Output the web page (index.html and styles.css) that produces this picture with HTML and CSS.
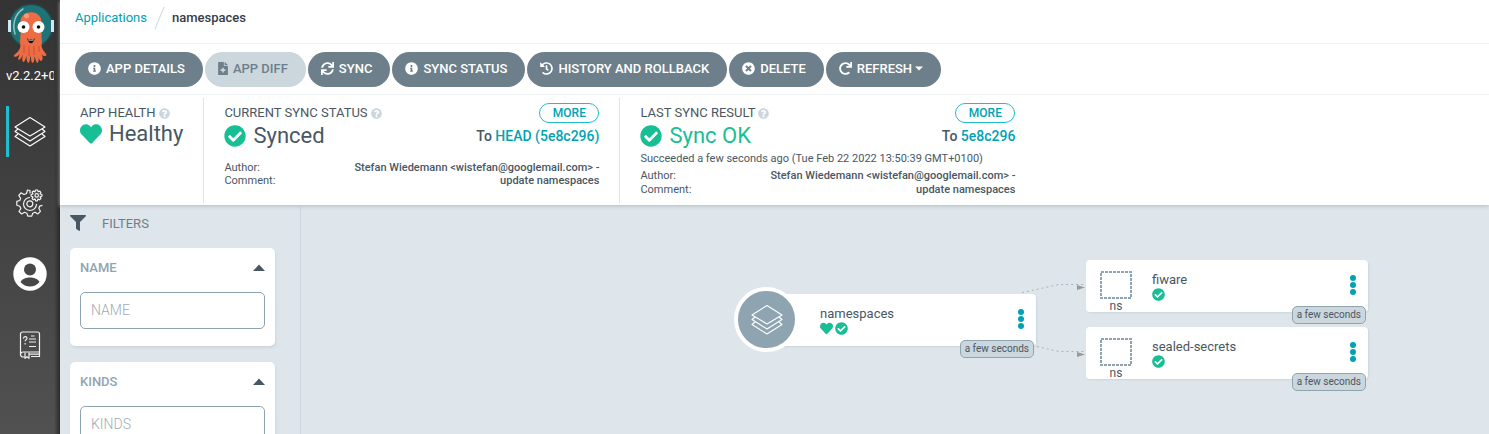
FILE: index.html
```html
<!DOCTYPE html>
<html lang="en">
<head>
<meta charset="utf-8">
<title>namespaces - Applications</title>
<link rel="stylesheet" href="styles.css">
</head>
<body>
<svg class="sprite" aria-hidden="true">
  <symbol id="info" viewBox="0 0 512 512"><path d="M256 8C119.043 8 8 119.083 8 256c0 136.997 111.043 248 248 248s248-111.003 248-248C504 119.083 392.957 8 256 8zm0 110c23.196 0 42 18.804 42 42s-18.804 42-42 42-42-18.804-42-42 18.804-42 42-42zm56 254c0 6.627-5.373 12-12 12h-88c-6.627 0-12-5.373-12-12v-24c0-6.627 5.373-12 12-12h12v-64h-12c-6.627 0-12-5.373-12-12v-24c0-6.627 5.373-12 12-12h64c6.627 0 12 5.373 12 12v100h12c6.627 0 12 5.373 12 12v24z"/></symbol>
  <symbol id="check" viewBox="0 0 512 512"><path d="M504 256c0 136.967-111.033 248-248 248S8 392.967 8 256 119.033 8 256 8s248 111.033 248 248zM227.314 387.314l184-184c6.248-6.248 6.248-16.379 0-22.627l-22.627-22.627c-6.248-6.249-16.379-6.249-22.628 0L216 308.118l-70.059-70.059c-6.248-6.248-16.379-6.248-22.628 0l-22.627 22.627c-6.248 6.248-6.248 16.379 0 22.627l104 104c6.249 6.249 16.379 6.249 22.628.001z"/></symbol>
  <symbol id="heart" viewBox="0 0 512 512"><path d="M462.3 62.6C407.5 15.9 326 24.3 275.7 76.2L256 96.5l-19.7-20.3C186.1 24.3 104.5 15.9 49.7 62.6c-62.8 53.6-66.1 149.8-9.9 207.9l193.5 199.8c12.5 12.9 32.8 12.9 45.3 0l193.5-199.8c56.3-58.1 53-154.3-9.8-207.9z"/></symbol>
  <symbol id="times" viewBox="0 0 512 512"><path d="M256 8C119 8 8 119 8 256s111 248 248 248 248-111 248-248S393 8 256 8zm121.600 313.100c4.700 4.700 4.700 12.300 0 17L338 377.600c-4.700 4.700-12.300 4.700-17 0L256 312l-65.100 65.600c-4.700 4.700-12.300 4.700-17 0L134.400 338c-4.700-4.700-4.700-12.300 0-17l65.600-65-65.600-65.100c-4.700-4.700-4.700-12.300 0-17l39.600-39.600c4.700-4.700 12.300-4.700 17 0l65 65.700 65.100-65.600c4.700-4.700 12.300-4.700 17 0l39.600 39.600c4.700 4.700 4.700 12.300 0 17L312 256l65.600 65.100z"/></symbol>
  <symbol id="redo" viewBox="0 0 512 512"><path d="M500.33 0h-47.41a12 12 0 0 0-12 12.57l4 82.76A247.42 247.42 0 0 0 256 8C119.34 8 7.9 119.53 8 256.19 8.1 393.07 119.1 504 256 504a247.1 247.1 0 0 0 166.18-63.91 12 12 0 0 0 .48-17.43l-34-34a12 12 0 0 0-16.38-.55A176 176 0 1 1 402.1 157.8l-101.53-4.87a12 12 0 0 0-12.57 12v47.41a12 12 0 0 0 12 12h200.33a12 12 0 0 0 12-12V12a12 12 0 0 0-12-12z"/></symbol>
  <symbol id="sync" viewBox="0 0 512 512"><path d="M440.65 12.57l4 82.77A247.16 247.16 0 0 0 255.83 8C134.73 8 33.91 94.92 12.29 209.82A12 12 0 0 0 24.09 224h49.05a12 12 0 0 0 11.67-9.26 175.91 175.91 0 0 1 317-56.94l-101.46-4.86a12 12 0 0 0-12.57 12v47.41a12 12 0 0 0 12 12H500a12 12 0 0 0 12-12V12a12 12 0 0 0-12-12h-47.37a12 12 0 0 0-11.98 12.57zM255.83 432a175.61 175.61 0 0 1-146-77.8l101.8 4.87a12 12 0 0 0 12.57-12v-47.4a12 12 0 0 0-12-12H12a12 12 0 0 0-12 12V500a12 12 0 0 0 12 12h47.35a12 12 0 0 0 12-12.6l-4.15-82.57A247.17 247.17 0 0 0 255.83 504c121.11 0 221.93-86.92 243.55-201.82a12 12 0 0 0-11.8-14.18h-49.05a12 12 0 0 0-11.67 9.26A175.86 175.86 0 0 1 255.83 432z"/></symbol>
  <symbol id="history" viewBox="0 0 512 512"><path d="M504 255.531c.253 136.64-111.18 248.372-247.82 248.468-59.015.042-113.223-20.53-155.822-54.911-11.077-8.94-11.905-25.541-1.839-35.607l11.267-11.267c8.609-8.609 22.353-9.551 31.891-1.984C173.062 425.135 212.781 440 256 440c101.705 0 184-82.311 184-184 0-101.705-82.311-184-184-184-48.814 0-93.149 18.969-126.068 49.932l50.754 50.754c10.08 10.08 2.941 27.314-11.313 27.314H24c-8.837 0-16-7.163-16-16V38.627c0-14.254 17.234-21.393 27.314-11.314l49.372 49.372C129.209 34.136 189.552 8 256 8c136.81 0 247.747 110.78 248 247.531zm-180.912 78.784l9.823-12.63c8.138-10.463 6.253-25.542-4.21-33.679L288 256.349V152c0-13.255-10.745-24-24-24h-16c-13.255 0-24 10.745-24 24v135.651l65.409 50.874c10.463 8.137 25.541 6.253 33.679-4.21z"/></symbol>
  <symbol id="question" viewBox="0 0 512 512"><path d="M504 256c0 136.997-111.043 248-248 248S8 392.997 8 256C8 119.083 119.043 8 256 8s248 111.083 248 248zM262.655 90c-54.497 0-89.255 22.957-116.549 63.758-3.536 5.286-2.353 12.415 2.715 16.258l34.699 26.31c5.205 3.947 12.621 3.008 16.665-2.122 17.864-22.658 30.113-35.797 57.303-35.797 20.429 0 45.698 13.148 45.698 32.958 0 14.976-12.363 22.667-32.534 33.976C247.128 238.528 216 254.941 216 296v4c0 6.627 5.373 12 12 12h56c6.627 0 12-5.373 12-12v-1.333c0-28.462 83.186-29.647 83.186-106.667 0-58.002-60.165-102-116.531-102zM256 338c-25.365 0-46 20.635-46 46 0 25.364 20.635 46 46 46s46-20.636 46-46c0-25.364-20.635-46-46-46z"/></symbol>
  <symbol id="filter" viewBox="0 0 512 512"><path d="M487.976 0H24.028C2.71 0-8.047 25.866 7.058 40.971L192 225.941V432c0 7.831 3.821 15.17 10.237 19.662l80 55.98C298.02 518.69 320 507.493 320 487.98V225.941l184.947-184.97C520.021 25.896 509.338 0 487.976 0z"/></symbol>
  <symbol id="diff" viewBox="0 0 384 512"><path fill-rule="evenodd" d="M24 0h200v136c0 13 11 24 24 24h136v328c0 13-11 24-24 24H24c-13 0-24-11-24-24V24C0 11 11 0 24 0zM256 0h6l122 122v6H256zM160 224v64H96v64h64v64h64v-64h64v-64h-64v-64z"/></symbol>
  <symbol id="caret-up" viewBox="0 0 12 7"><path d="M6 0.500 12 7H0z"/></symbol>
  <symbol id="caret-down" viewBox="0 0 8 5"><path d="M0 0.500h8L4 4.500z"/></symbol>
  <symbol id="dots" viewBox="0 0 6 20"><circle cx="3" cy="3" r="3"/><circle cx="3" cy="10" r="3"/><circle cx="3" cy="17" r="3"/></symbol>
  <symbol id="layers" viewBox="0 0 32 32"><g fill="none" stroke="currentColor" stroke-width="1.100" stroke-linejoin="round"><path d="M16 1.500 31 11 16 20 1 11z"/><path d="M4 13 1 15.500l15 9.500 15-9.500-3-2.500"/><path d="M4 18 1 20.500 16 30l15-9.500-3-2.500"/></g></symbol>
</svg>
<div class="layout">
  <nav class="sidebar" aria-label="Main">
    <svg class="logo" viewBox="0 0 48 64" role="img" aria-label="Argo">
      <circle cx="24" cy="26" r="22.500" fill="#25484a"/>
      <circle cx="24" cy="26" r="21" fill="#1d7376"/>
      <path d="M8 34C5 24 8 14 16 9" fill="none" stroke="#93c4c4" stroke-width="1.500" stroke-linecap="round"/>
      <path d="M1 20h3v12H1zM44 20h3v12h-3z" fill="#cfe6f5"/>
      <path d="M13.500 22C12 8 18 12 24 12s12-4 10.500 10z" fill="none"/>
      <path d="M13.500 22c0-13 21-13 21 0v12c0 6 1 8 0 12 1 5 4 6 5 9-1 2-4 1-5-1 1 3 2 5 0 7-2 0-3-3-3-6 0 3 1 6-1 8-2-1-2-5-3-7 0 3 0 6-2 7-2-2-1-5-2-7-1 3 0 5-2 7-2-1-2-5-2-7-1 2-1 5-3 6-2-1-1-5-1-7-1 2-2 5-4 5-1-2 1-4 1-6-1 2-4 4-6 2 2-3 6-4 7-10-1-4 0-8 0-12z" fill="#ee6c44"/>
      <path d="M17 45v8m5-7v10m5-10v9m5-9v6" stroke="#c94f30" fill="none"/>
      <circle cx="19.500" cy="16" r="2.500" fill="#f79a7a"/>
      <circle cx="16.500" cy="27" r="6" fill="#fff"/><circle cx="31.500" cy="27" r="6" fill="#fff"/>
      <circle cx="16.500" cy="27" r="1.800" fill="#111"/><circle cx="31.500" cy="27" r="1.800" fill="#111"/>
      <path d="M20 38c2 7 6 7 8 0-2 2-6 2-8 0z" fill="#111"/><path d="M21.500 39.300c1.500 1 3.500 1 5 0v1.200h-5z" fill="#fff"/>
    </svg>
    <div class="version">v2.2.2+0f7bf8c</div>
    <a class="nav-item active" href="#applications" aria-label="Applications"><svg width="32" height="32"><use href="#layers"/></svg></a>
    <a class="nav-item" href="#settings" aria-label="Settings">
      <svg class="outline" width="28" height="28" viewBox="0 0 28 28">
        <path d="M14 4.500V1.500L11.500 1l-1 3.500-2.500 1L5 3.800 2.800 6.500 4.600 9.400 3.800 11.500.8 12.300v4l3 .9 1 2.400L3 22.500 5.700 25l2.900-1.700 2.300.9.900 3h4l.9-3 2.300-1 2.900 1.700 2.500-2.600-1.600-3 .9-2.200 2.700-.8"/>
        <path d="M14 8.500a6.500 6.500 0 1 0 6.500 6.500"/><circle cx="13.800" cy="14.800" r="3"/>
        <path d="m21.500 1 .6 1.800 1.700-.7 1 1.200-.8 1.600 1.900.6v1.800l-1.900.6.900 1.700-1.300 1.200-1.600-.9-.6 1.900h-1.800l-.6-1.900-1.700.9-1.200-1.300.9-1.600-1.900-.6V5.500l1.900-.6-.9-1.700 1.300-1.200 1.600.9.500-1.900z"/><circle cx="20.700" cy="6.400" r="1.700"/>
      </svg>
    </a>
    <a class="nav-item" href="#user" aria-label="User info">
      <svg width="34" height="34" viewBox="0 0 34 34"><circle cx="17" cy="17" r="16.700" fill="#fff"/><circle cx="17" cy="12.500" r="6" fill="#474747"/><path d="M7.500 25c2-3.500 6-4.500 9.500-4.500s7.500 1 9.500 4.500c-5 6-14 6-19 0z" fill="#474747"/></svg>
    </a>
    <a class="nav-item" href="#help" aria-label="Documentation">
      <svg class="outline" width="22" height="28" viewBox="0 0 22 28">
        <path d="M6 26H4a2.500 2.500 0 0 1-2.500-2.500V3A2 2 0 0 1 3.500 1h15a2 2 0 0 1 2 2v22.500H12"/><path d="M1.500 23.500C1.500 21.500 3 21 4 21h16.500M10 23.200h10"/><path d="M6 21.500v5.800l2-1.500 2 1.500v-5.800"/>
        <path d="M4.500 7.500c0-2.500 3.500-2.300 3.500-.2 0 1.600-1.900 1.200-1.900 3M6.100 12v1.500M12 5h3.500M10 8h7M10 11h7M10 15.500h7"/>
      </svg>
    </a>
  </nav>
  <main class="page">
    <header class="top">
      <div class="breadcrumb"><a href="#applications">Applications</a><svg width="11" height="22" viewBox="0 0 11 22" aria-hidden="true"><path d="M1 22 10 0" stroke="#ccd6dd" fill="none"/></svg><span>namespaces</span></div>
      <div class="toolbar">
        <button type="button"><svg><use href="#info"/></svg>APP DETAILS</button>
        <button type="button" disabled><svg class="narrow"><use href="#diff"/></svg>APP DIFF</button>
        <button type="button"><svg><use href="#sync"/></svg>SYNC</button>
        <button type="button"><svg><use href="#info"/></svg>SYNC STATUS</button>
        <button type="button"><svg><use href="#history"/></svg>HISTORY AND ROLLBACK</button>
        <button type="button"><svg><use href="#times"/></svg>DELETE</button>
        <button type="button"><svg><use href="#redo"/></svg>REFRESH<svg class="caret"><use href="#caret-down"/></svg></button>
      </div>
      <div class="status">
        <section class="panel">
          <h2>APP HEALTH <svg><use href="#question"/></svg></h2>
          <div class="state compact"><svg><use href="#heart"/></svg>Healthy</div>
        </section>
        <section class="panel wide">
          <div class="row"><h2>CURRENT SYNC STATUS <svg><use href="#question"/></svg></h2><button type="button" class="more">MORE</button></div>
          <div class="row"><div class="state"><svg><use href="#check"/></svg>Synced</div><div class="target">To <a href="#head">HEAD (5e8c296)</a></div></div>
          <dl class="commit"><dt>Author:</dt><dd>Stefan Wiedemann &lt;wistefan@googlemail.com&gt; -</dd><dt>Comment:</dt><dd>update namespaces</dd></dl>
        </section>
        <section class="panel wide">
          <div class="row"><h2>LAST SYNC RESULT <svg><use href="#question"/></svg></h2><button type="button" class="more">MORE</button></div>
          <div class="row"><div class="state ok"><svg><use href="#check"/></svg>Sync OK</div><div class="target">To <a href="#revision">5e8c296</a></div></div>
          <p class="when">Succeeded a few seconds ago (Tue Feb 22 2022 13:50:39 GMT+0100)</p>
          <dl class="commit result"><dt>Author:</dt><dd>Stefan Wiedemann &lt;wistefan@googlemail.com&gt; -</dd><dt>Comment:</dt><dd>update namespaces</dd></dl>
        </section>
      </div>
    </header>
    <div class="body">
      <aside class="filters">
        <div class="filters-title"><svg><use href="#filter"/></svg>FILTERS</div>
        <section class="filter"><div class="row"><label for="name">NAME</label><button type="button" aria-label="Collapse name"><svg><use href="#caret-up"/></svg></button></div><input id="name" type="text" placeholder="NAME"></section>
        <section class="filter"><div class="row"><label for="kinds">KINDS</label><button type="button" aria-label="Collapse kinds"><svg><use href="#caret-up"/></svg></button></div><input id="kinds" type="text" placeholder="KINDS"></section>
      </aside>
      <div class="tree">
        <svg class="edges" aria-hidden="true">
          <g fill="none" stroke="#a3b3bd" stroke-dasharray="2 3"><path d="M721 87.500 758 79.500H785"/><path d="M736 141.500 758 146.500H785"/></g>
          <path d="M776 80v5l8-2.500zM776 147v5l8-2.500z" fill="#999"/>
        </svg>
        <article class="node app">
          <span class="disc"><svg width="32" height="32"><use href="#layers"/></svg></span>
          <div class="label"><span>namespaces</span><span class="marks"><svg><use href="#heart"/></svg><svg><use href="#check"/></svg></span></div>
          <button type="button" class="menu" aria-label="namespaces actions"><svg><use href="#dots"/></svg></button>
          <span class="age">a few seconds</span>
        </article>
        <article class="node fiware">
          <div class="kind"><svg viewBox="0 0 32 28"><rect x="1" y="1" width="30" height="26"/></svg>ns</div>
          <div class="label"><span>fiware</span><span class="marks"><svg><use href="#check"/></svg></span></div>
          <button type="button" class="menu" aria-label="fiware actions"><svg><use href="#dots"/></svg></button>
          <span class="age">a few seconds</span>
        </article>
        <article class="node secrets">
          <div class="kind"><svg viewBox="0 0 32 28"><rect x="1" y="1" width="30" height="26"/></svg>ns</div>
          <div class="label"><span>sealed-secrets</span><span class="marks"><svg><use href="#check"/></svg></span></div>
          <button type="button" class="menu" aria-label="sealed-secrets actions"><svg><use href="#dots"/></svg></button>
          <span class="age">a few seconds</span>
        </article>
      </div>
    </div>
  </main>
</div>
</body>
</html>
```
FILE: styles.css
```css
* { box-sizing: border-box; }
body { margin: 0; font-family: Roboto, "Liberation Sans", sans-serif; font-size: 13px; color: #495763; background: #dee6eb; }
a { color: #00a2b3; text-decoration: none; }
button { font: inherit; border: 0; background: none; padding: 0; cursor: pointer; }
h2, p, dl, dd { margin: 0; font-weight: 400; }
svg { fill: currentColor; flex: none; }
.sprite { position: absolute; width: 0; height: 0; }
.layout { display: flex; height: 100vh; overflow: hidden; }
.row { display: flex; justify-content: space-between; }

.sidebar { width: 60px; flex: none; display: flex; flex-direction: column; align-items: center; background: linear-gradient(to right, transparent 54px, #2b2a27), linear-gradient(#333, #515151); }
.logo { width: 48px; height: 64px; margin-left: 2px; }
.version { width: 48px; margin: 2px 0 20px; overflow: hidden; white-space: nowrap; color: #fff; line-height: 20px; }
.nav-item { width: 48px; height: 51px; margin-bottom: 20px; display: flex; align-items: center; justify-content: center; color: #fff; flex: none; }
.nav-item.active { border-left: 3px solid #1fbdd0; padding-right: 3px; }
.outline { fill: none; stroke: #f2f2f2; stroke-width: 1.2; stroke-linejoin: round; }

.page { flex: 1; min-width: 0; display: flex; flex-direction: column; }
.top { position: relative; background: #fff; box-shadow: 0 1px 4px #aebbc4; }
.breadcrumb { height: 44px; padding: 0 15px 8px; display: flex; align-items: center; gap: 7px; border-bottom: 1px solid #eff3f5; font-weight: 500; color: #363c4a; }
.breadcrumb a { font-weight: 400; }
.toolbar { height: 51px; padding: 8px 15px 7px; display: flex; gap: 2px; border-bottom: 1px solid #eff3f5; }
.toolbar button { display: flex; align-items: center; padding: 0 18px 2px 13px; border-radius: 18px; background: #6d7f8b; color: #fff; font-weight: 500; white-space: nowrap; }
.toolbar button:disabled { background: #ccd6dd; color: #6d7f8b; }
.toolbar svg { width: 13px; height: 13px; margin-right: 5px; }
.toolbar .narrow { width: 10px; }
.toolbar .caret { width: 8px; height: 5px; margin: 0 0 0 3px; }
.status { display: flex; height: 110px; padding: 3px 0 2px; }
.panel { padding: 5px 20px 0; border-right: 1px solid #dee6eb; }
.panel:last-child { border-right-color: transparent; }
.panel.wide { width: 416px; }
.panel h2 { font-size: 13px; line-height: 20px; white-space: nowrap; }
.panel h2 svg { width: 11px; height: 11px; color: #ccd6dd; vertical-align: -2px; }
.state { display: flex; align-items: center; gap: 7px; font-size: 22px; line-height: 26px; }
.state.compact { margin-top: -2px; }
.state svg { width: 22px; height: 22px; color: #18be94; }
.state.ok { color: #18be94; }
.more { width: 60px; height: 20px; border: 1px solid #1fbdd0; border-radius: 10px; color: #00a2b3; font-size: 12px; font-weight: 500; }
.target { font-size: 14px; font-weight: 500; line-height: 26px; }
.commit { display: grid; grid-template-columns: auto 1fr; margin-top: 12px; font-size: 11px; line-height: 13px; }
.commit dd { text-align: right; font-weight: 500; }
.when { padding-top: 1px; font-size: 11px; line-height: 18px; }
.commit.result { margin-top: 1px; line-height: 14px; }

.body { flex: 1; min-height: 0; display: flex; }
.filters { width: 241px; flex: none; padding: 8px 25px 0 10px; border-right: 1px solid #ccd6dd; }
.filters-title { display: flex; align-items: center; gap: 16px; height: 20px; margin-bottom: 15px; color: #6d7f8b; }
.filters-title svg { width: 16px; height: 16px; color: #495763; }
.filter { height: 98px; margin-bottom: 16px; padding: 10px; background: #fff; border-radius: 5px; box-shadow: 1px 2px 3px #ccd6dd; }
.filter .row { align-items: center; height: 18px; margin-bottom: 16px; }
.filter label { font-weight: 500; color: #8fa4b1; }
.filter .row svg { display: block; width: 12px; height: 7px; color: #495763; }
.filter input { display: block; width: 100%; height: 37px; padding: 0 10px 2px; border: 1px solid #8fa4b1; border-radius: 5px; font: 300 14px Roboto, sans-serif; }
.filter input::placeholder { color: #a0acb5; }

.tree { position: relative; flex: 1; overflow: hidden; }
.edges { position: absolute; inset: 0; width: 100%; height: 100%; }
.node { position: absolute; width: 282px; height: 52px; display: flex; background: #fff; border-radius: 4px; box-shadow: 1px 1px 2px #ccd6dd; }
.app { left: 453px; top: 89px; }
.fiware { left: 785px; top: 55px; }
.secrets { left: 785px; top: 122px; }
.disc { position: absolute; left: -20px; top: -7px; width: 65px; height: 65px; display: flex; align-items: center; justify-content: center; border: 4px solid #fff; border-radius: 50%; background: #8fa4b1; color: #fff; }
.label { position: absolute; left: 66px; top: 11px; display: grid; line-height: 17px; }
.marks { display: flex; gap: 2px; color: #18be94; }
.marks svg { width: 13px; height: 13px; }
.kind { width: 32px; margin: 11px 0 0 14px; font-size: 12px; line-height: 15px; text-align: center; }
.kind svg { display: block; width: 32px; height: 28px; fill: none; stroke: #8fa4b1; stroke-width: 2px; stroke-dasharray: 3px 1px; }
.menu { position: absolute; right: 12px; top: 15px; color: #00a2b3; }
.menu svg { display: block; width: 6px; height: 20px; }
.age { position: absolute; right: 2px; bottom: -12px; height: 18px; padding: 0 4px; border: 1px solid #8fa4b1; border-radius: 5px; background: #ccd6dd; font-size: 10px; line-height: 16px; white-space: nowrap; }
```
